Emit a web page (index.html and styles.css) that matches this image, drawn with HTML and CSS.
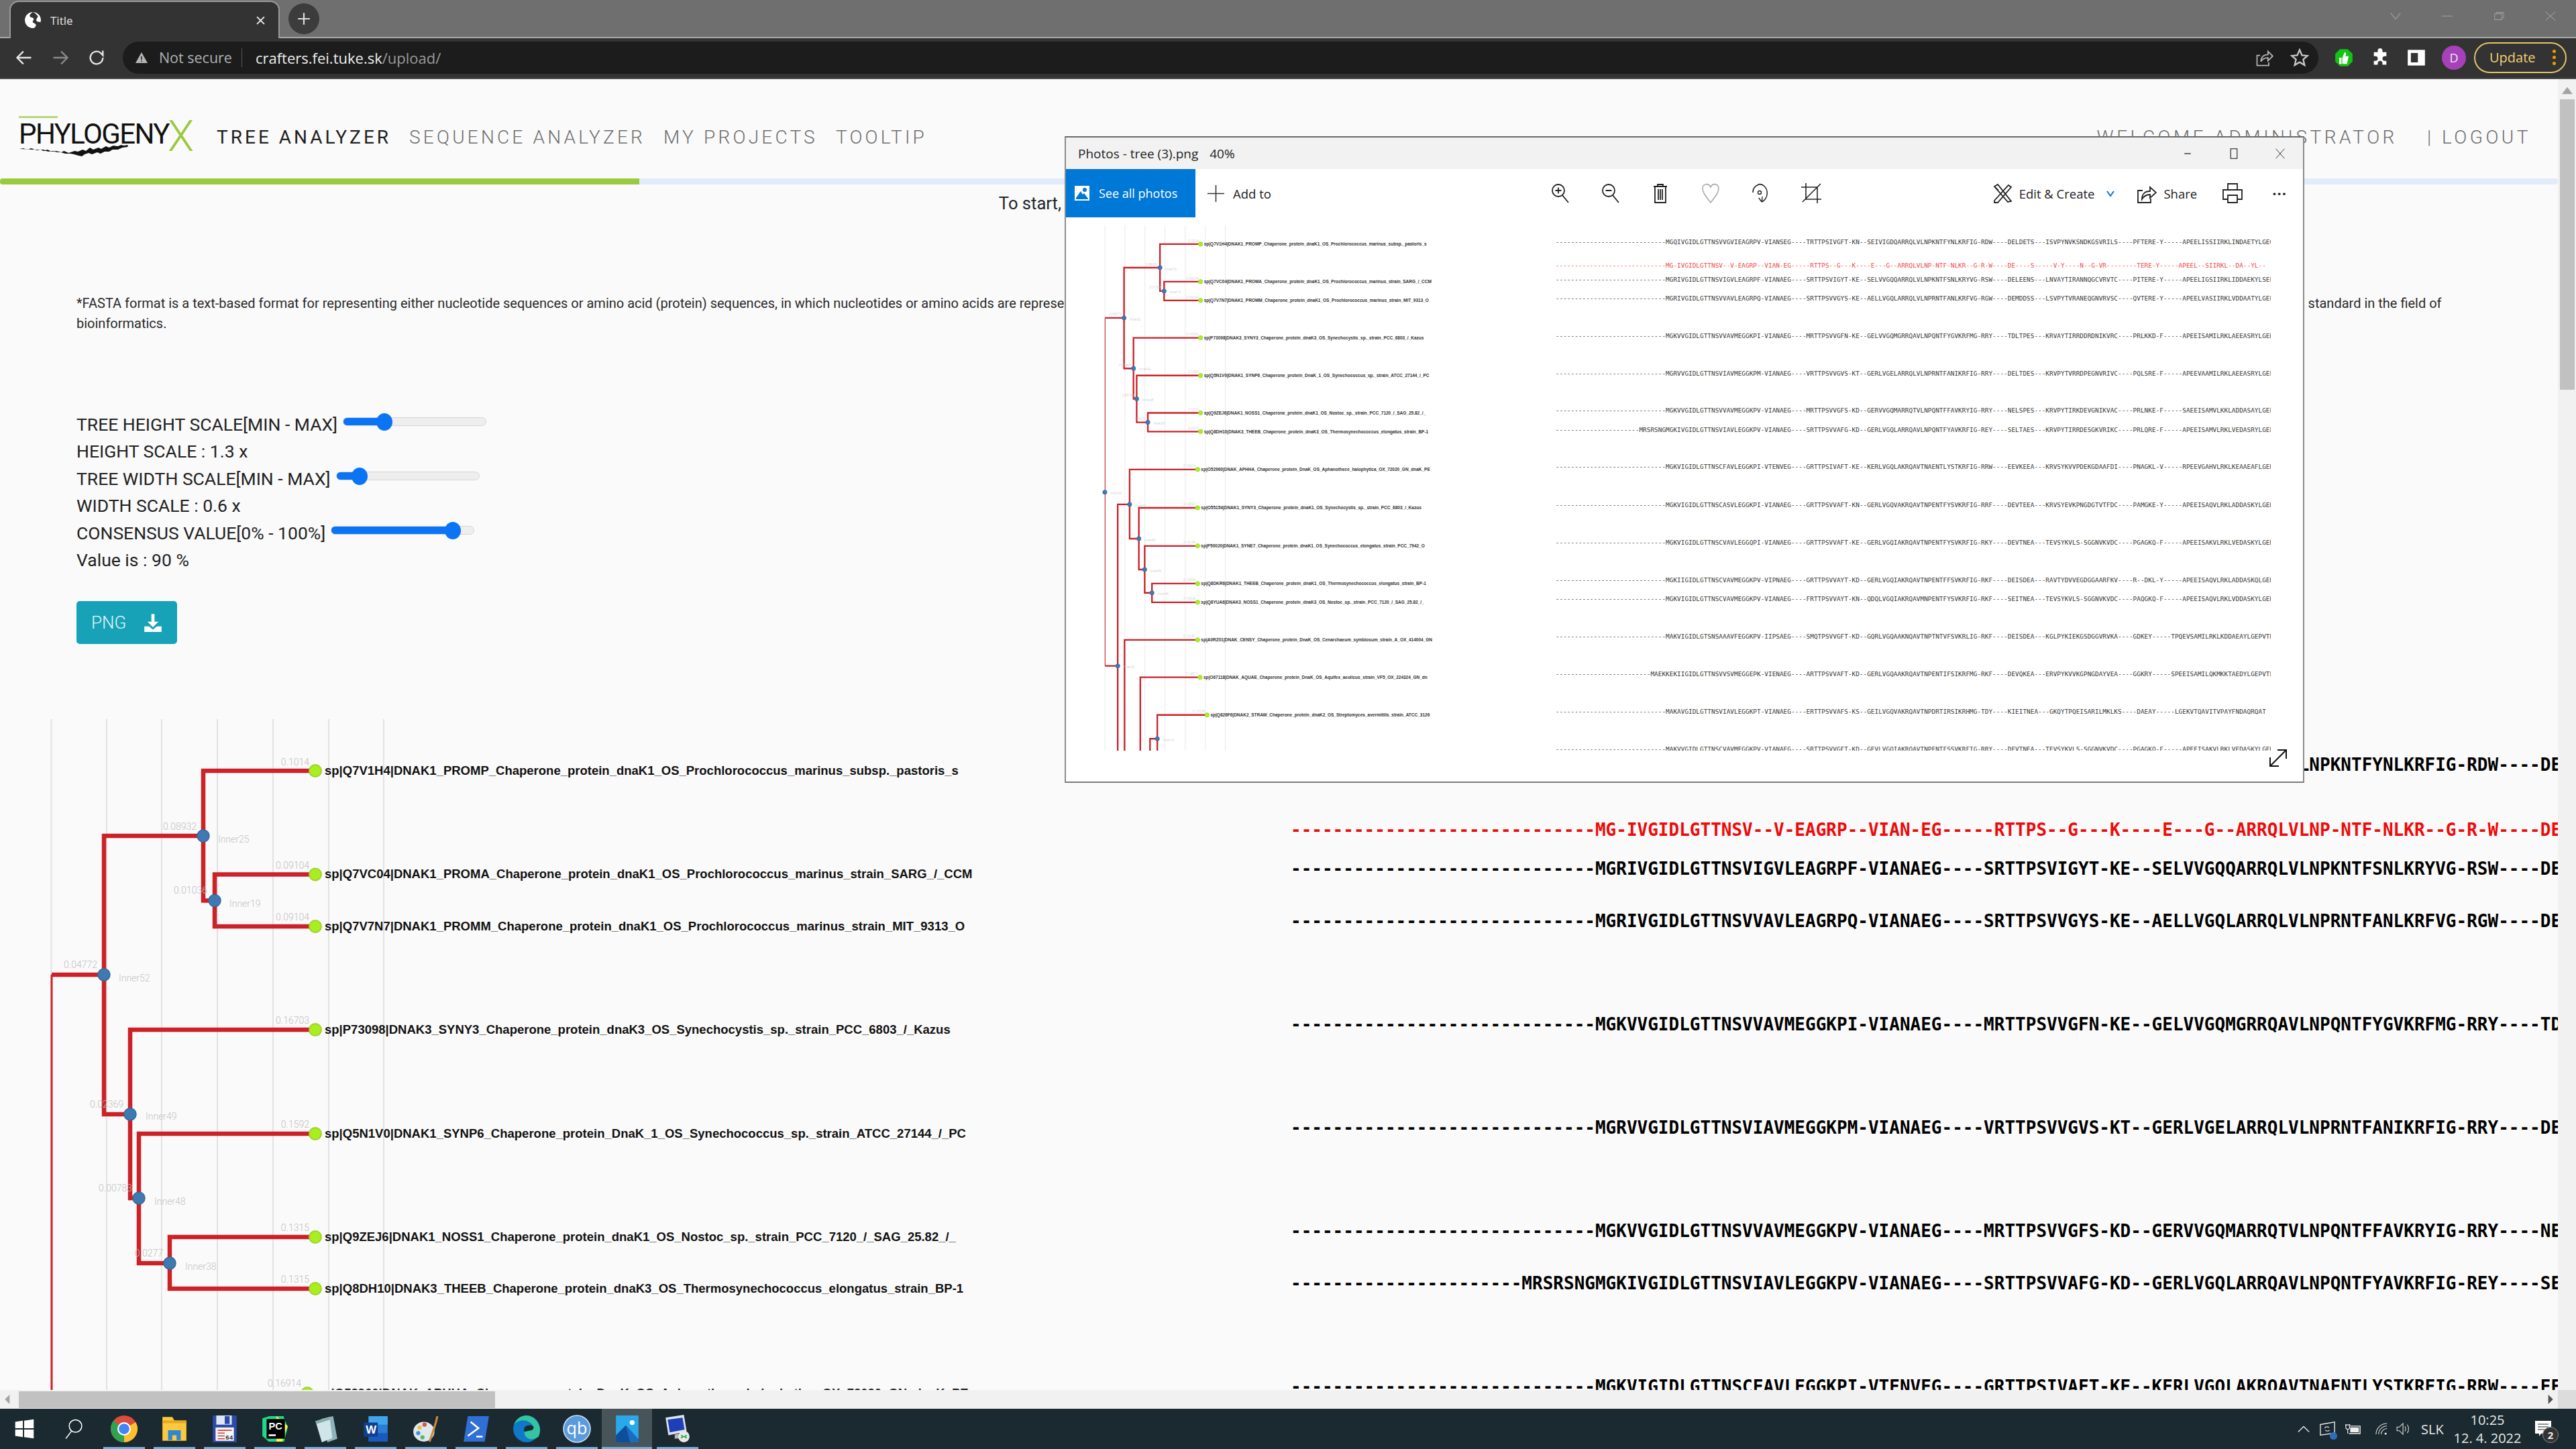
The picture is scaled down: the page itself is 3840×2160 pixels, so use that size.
FILE: index.html
```html
<!DOCTYPE html>
<html lang="en">
<head>
<meta charset="utf-8">
<title>Title</title>
<link rel="stylesheet" href="styles.css">
</head>
<body>
<div class="tabstrip">
  <div class="tab">
    <svg class="tab-globe" viewBox="0 0 24 24"><circle cx="12" cy="12" r="11" fill="#fff"/><path d="M12 1c-3 2-5 4-4 6s4 1 5 3-2 3-1 5 3 1 4 3-1 4-3 5c5 0 9-3 10-8-3-1-5 0-6-2s1-4 2-6c-2-3-4-5-7-6z" fill="#333"/></svg>
    <span class="tab-title">Title</span>
    <svg class="tab-close" viewBox="0 0 12 12"><path d="M1 1l10 10M11 1L1 11" stroke="#e8e8e8" stroke-width="1.8"/></svg>
  </div>
  <div class="newtab"><svg viewBox="0 0 20 20"><path d="M10 2v16M2 10h16" stroke="#ddd" stroke-width="2"/></svg></div>
  <div class="winctl">
    <svg viewBox="0 0 20 14"><path d="M2 2l8 10 8-10" stroke="#9a9a9a" fill="none" stroke-width="1.4"/></svg>
    <svg viewBox="0 0 20 14"><path d="M1 7h18" stroke="#9a9a9a" stroke-width="1.4"/></svg>
    <svg viewBox="0 0 20 14"><path d="M3 3h12v10H3zM6 3V1h12v9h-3" stroke="#9a9a9a" fill="none" stroke-width="1.2"/></svg>
    <svg viewBox="0 0 20 14"><path d="M2 0l16 14M18 0L2 14" stroke="#9a9a9a" stroke-width="1.2"/></svg>
  </div>
</div>

<div class="toolbar">
  <svg class="nav-ico" viewBox="0 0 24 24"><path d="M21 12H4M11 4l-8 8 8 8" fill="none" stroke="#e8e8e8" stroke-width="2"/></svg>
  <svg class="nav-ico" viewBox="0 0 24 24"><path d="M3 12h17M13 4l8 8-8 8" fill="none" stroke="#8a8a8a" stroke-width="2"/></svg>
  <svg class="nav-ico" viewBox="0 0 24 24"><path d="M20 12a8 8 0 1 1-2.5-5.8L20 9V3" fill="none" stroke="#e8e8e8" stroke-width="2"/></svg>
  <div class="omnibox">
    <svg class="warn" viewBox="0 0 20 20"><path d="M10 2l9 16H1z" fill="#b5b5b5"/><path d="M10 8v5M10 14.500v1.500" stroke="#1c1c1c" stroke-width="1.500"/></svg>
    <span class="notsecure">Not secure</span>
    <span class="url"><b>crafters.fei.tuke.sk</b>/upload/</span>
    <svg class="omni-ico share-ico" viewBox="0 0 24 24"><path d="M7 9H3v13h15v-4M8 17c0-6 4-9 9-9V4l6 6-6 6v-4c-4 0-7 1-9 5z" fill="none" stroke="#b8b8b8" stroke-width="1.500"/></svg>
    <svg class="omni-ico" viewBox="0 0 24 24"><path d="M12 2l3 7 7 .6-5.400 4.700 1.700 7.200L12 17.700l-6.300 3.800 1.700-7.200L2 9.600 9 9z" fill="none" stroke="#c8c8c8" stroke-width="2"/></svg>
  </div>
  <div class="ext-row">
    <svg class="ext" viewBox="0 0 24 24"><path d="M7 1h10l6 6v10l-6 6H7l-6-6V7z" fill="#14c414"/><path d="M6 12h3v8H6zM10 12l3-7c2 0 2 2 1 5h4l-2 10h-6z" fill="#fff"/></svg>
    <svg class="ext" viewBox="0 0 24 24"><path d="M9 3a3 3 0 0 1 6 0v2h5v5h-2a3 3 0 0 0 0 6h2v5h-5v-2a3 3 0 0 0-6 0v2H4v-5h2a3 3 0 0 0 0-6H4V5h5z" fill="#fff"/></svg>
    <svg class="ext" viewBox="0 0 24 24"><path d="M1 2h22v20H1z" fill="#fff"/><path d="M5 6h9v12H5z" fill="#333"/></svg>
    <span class="avatar">D</span>
    <span class="update">Update<i class="dots"></i></span>
  </div>
</div>

<main class="page">
  <div class="viewport">
    <header class="site-header">
      <div class="logo">
        <span class="logo-bar"></span>
        <span class="logo-text">PHYLOGENY</span><span class="logo-x">X</span>
        <svg class="logo-smear" viewBox="0 0 220 20" preserveAspectRatio="none"><path d="M0 6l6-1 5 2 7-2 8 3 6-1 4 2 6-2 7 3 6-1 8 2 4-2 7 3 9-3 5 1 7-3 5 2 6-5 5 3 8-3 4 2 7-4 5 2 6-3 7 1 5-2 4 1 6-1v3l-8 1-7 3-8 0-5 3-7 0-6 3-5-2-8 3-5-2-6 2-4 3-5-1-7-2-5-1-8 0-7-2-5 0-8-2-6 1-7-3-6 0z" fill="#111"/></svg>
      </div>
      <nav class="mainnav">
        <a class="active">TREE ANALYZER</a>
        <a>SEQUENCE ANALYZER</a>
        <a>MY PROJECTS</a>
        <a>TOOLTIP</a>
      </nav>
      <div class="usernav"><a>WELCOME ADMINISTRATOR</a><a>| LOGOUT</a></div>
    </header>
    <div class="progress"><div class="progress-fill"></div></div>
    <p class="lead">To start, upload a file in FASTA format or choose one of your own projects</p>
    <p class="fasta">*FASTA format is a text-based format for representing either nucleotide sequences or amino acid (protein) sequences, in which nucleotides or amino acids are represented using single-letter codes. The format allows for sequence names and comments to precede the sequences. The format originates from the FASTA software package, but has since become a near universal standard in the field of bioinformatics.</p>
    <form class="controls">
      <div class="ctl-row"><label for="h">TREE HEIGHT SCALE[MIN - MAX]</label><input id="h" class="range" type="range" min="0" max="100" value="26" style="--p:29%"></div>
      <div class="ctl-row">HEIGHT SCALE : 1.3 x</div>
      <div class="ctl-row"><label for="w">TREE WIDTH SCALE[MIN - MAX]</label><input id="w" class="range" type="range" min="0" max="100" value="12" style="--p:16%"></div>
      <div class="ctl-row">WIDTH SCALE : 0.6 x</div>
      <div class="ctl-row"><label for="c">CONSENSUS VALUE[0% - 100%]</label><input id="c" class="range" type="range" min="0" max="100" value="90" style="--p:85%"></div>
      <div class="ctl-row">Value is : 90 %</div>
      <button class="png" type="button">PNG
        <svg viewBox="0 0 24 24"><path d="M10 1h4v10h5l-7 7-7-7h5z" fill="#fff"/><path d="M1 17h6l5 4 5-4h6v7H1z" fill="#fff"/></svg>
      </button>
    </form>

    <svg class="tree-view" viewBox="0 1060 3813 1012">
      <defs>
        <g id="tree">
          <g class="grid">
            <path d="M76.500 1072V3300M159 1072V3300M241 1072V3300M324 1072V3300M407 1072V3300M490 1072V3300M572 1072V3300"/>
          </g>
          <path class="root" d="M77 1453V2886"/>
          <path class="br" d="M77 1453H155V1246H303V1149H470M303 1246V1342.500H320V1303.500H470M320 1342.500V1381H470M155 1453V1661H194V1535H470M194 1661V1786H207V1690H470M207 1786V1883H253V1844H470M253 1883V1921H470"/>
          <path class="br" d="M77 2886H129V2221H178V2077H458M178 2221V2362H216V2235H458M216 2362V2489H240V2392H458M240 2489V2585H270V2547H458M270 2585V2624H458M129 2886V3300M157 3300V2779H458M222 3300V2933H468M262 3300V3186H292V3088H497M292 3186V3300"/>
          <g class="inner">
            <circle cx="303" cy="1246" r="9"/><circle cx="320" cy="1342.500" r="9"/><circle cx="155" cy="1453" r="9"/><circle cx="194" cy="1661" r="9"/><circle cx="207" cy="1786" r="9"/><circle cx="253" cy="1883" r="9"/><circle cx="76" cy="2171" r="9"/><circle cx="178" cy="2221" r="9"/><circle cx="216" cy="2362" r="9"/><circle cx="240" cy="2489" r="9"/><circle cx="270" cy="2585" r="9"/><circle cx="129" cy="2886" r="9"/><circle cx="292" cy="3186" r="9"/>
          </g>
          <g class="tip">
            <circle cx="470" cy="1149" r="9"/><circle cx="470" cy="1303.500" r="9"/><circle cx="470" cy="1381" r="9"/><circle cx="470" cy="1535" r="9"/><circle cx="470" cy="1690" r="9"/><circle cx="470" cy="1844" r="9"/><circle cx="470" cy="1921" r="9"/><circle cx="458" cy="2077" r="9"/><circle cx="458" cy="2235" r="9"/><circle cx="458" cy="2392" r="9"/><circle cx="458" cy="2547" r="9"/><circle cx="458" cy="2624" r="9"/><circle cx="458" cy="2779" r="9"/><circle cx="468" cy="2933" r="9"/><circle cx="497" cy="3088" r="9"/>
          </g>
          <g class="blen">
            <text x="461" y="1141">0.1014</text><text x="293" y="1237">0.08932</text><text x="461" y="1295">0.09104</text><text x="309" y="1332">0.01036</text><text x="461" y="1372">0.09104</text><text x="145" y="1443">0.04772</text><text x="461" y="1526">0.16703</text><text x="184" y="1651">0.02369</text><text x="461" y="1681">0.1592</text><text x="197" y="1776">0.00783</text><text x="461" y="1835">0.1315</text><text x="243" y="1873">0.0277</text><text x="461" y="1912">0.1315</text><text x="449" y="2067">0.16914</text><text x="449" y="2225">0.14593</text><text x="449" y="2382">0.13199</text><text x="449" y="2537">0.10368</text><text x="449" y="2614">0.10368</text><text x="449" y="2769">0.19187</text><text x="459" y="2923">0.14817</text><text x="488" y="3078">0.12239</text>
          </g>
          <g class="inlabel">
            <text x="325" y="1256">Inner25</text><text x="342" y="1352">Inner19</text><text x="177" y="1463">Inner52</text><text x="217" y="1669">Inner49</text><text x="230" y="1796">Inner48</text><text x="276" y="1893">Inner38</text><text x="98" y="2181">Inner54</text><text x="200" y="2231">Inner50</text><text x="238" y="2372">Inner43</text><text x="262" y="2499">Inner39</text><text x="292" y="2595">Inner36</text><text x="151" y="2896">Inner53</text><text x="314" y="3196">Inner14</text>
          </g>
          <g class="leaf">
            <text x="484" y="1155">sp|Q7V1H4|DNAK1_PROMP_Chaperone_protein_dnaK1_OS_Prochlorococcus_marinus_subsp._pastoris_s</text>
            <text x="484" y="1309">sp|Q7VC04|DNAK1_PROMA_Chaperone_protein_dnaK1_OS_Prochlorococcus_marinus_strain_SARG_/_CCM</text>
            <text x="484" y="1387">sp|Q7V7N7|DNAK1_PROMM_Chaperone_protein_dnaK1_OS_Prochlorococcus_marinus_strain_MIT_9313_O</text>
            <text x="484" y="1541">sp|P73098|DNAK3_SYNY3_Chaperone_protein_dnaK3_OS_Synechocystis_sp._strain_PCC_6803_/_Kazus</text>
            <text x="484" y="1696">sp|Q5N1V0|DNAK1_SYNP6_Chaperone_protein_DnaK_1_OS_Synechococcus_sp._strain_ATCC_27144_/_PC</text>
            <text x="484" y="1850">sp|Q9ZEJ6|DNAK1_NOSS1_Chaperone_protein_dnaK1_OS_Nostoc_sp._strain_PCC_7120_/_SAG_25.82_/_</text>
            <text x="484" y="1927">sp|Q8DH10|DNAK3_THEEB_Chaperone_protein_dnaK3_OS_Thermosynechococcus_elongatus_strain_BP-1</text>
            <text x="472" y="2083">sp|O52960|DNAK_APHHA_Chaperone_protein_DnaK_OS_Aphanothece_halophytica_OX_72020_GN_dnaK_PE</text>
            <text x="472" y="2241">sp|O55154|DNAK1_SYNY3_Chaperone_protein_dnaK1_OS_Synechocystis_sp._strain_PCC_6803_/_Kazus</text>
            <text x="472" y="2398">sp|P50020|DNAK1_SYNE7_Chaperone_protein_dnaK1_OS_Synechococcus_elongatus_strain_PCC_7942_O</text>
            <text x="472" y="2553">sp|Q8DKR6|DNAK1_THEEB_Chaperone_protein_dnaK1_OS_Thermosynechococcus_elongatus_strain_BP-1</text>
            <text x="472" y="2630">sp|Q8YUA6|DNAK3_NOSS1_Chaperone_protein_dnaK3_OS_Nostoc_sp._strain_PCC_7120_/_SAG_25.82_/_</text>
            <text x="472" y="2785">sp|A0RZ01|DNAK_CENSY_Chaperone_protein_DnaK_OS_Cenarchaeum_symbiosum_strain_A_OX_414004_GN</text>
            <text x="482" y="2939">sp|O67118|DNAK_AQUAE_Chaperone_protein_DnaK_OS_Aquifex_aeolicus_strain_VF5_OX_224324_GN_dn</text>
            <text x="511" y="3094">sp|Q826F6|DNAK2_STRAW_Chaperone_protein_dnaK2_OS_Streptomyces_avermitilis_strain_ATCC_3126</text>
          </g>
          <g class="seq">
            <text x="1924" y="1149">-----------------------------MGQIVGIDLGTTNSVVGVIEAGRPV-VIANSEG----TRTTPSIVGFT-KN--SEIVIGDQARRQLVLNPKNTFYNLKRFIG-RDW----DELDETS---ISVPYNVKSNDKGSVRILS----PFTERE-Y-----APEELISSIIRKLINDAETYLGEQ</text>
            <text class="consensus" x="1924" y="1246">-----------------------------MG-IVGIDLGTTNSV--V-EAGRP--VIAN-EG-----RTTPS--G---K----E---G--ARRQLVLNP-NTF-NLKR--G-R-W----DE----S-----V-Y----N--G-VR--------TERE-Y-----APEEL--SIIRKL--DA--YL--</text>
            <text x="1924" y="1304">-----------------------------MGRIVGIDLGTTNSVIGVLEAGRPF-VIANAEG----SRTTPSVIGYT-KE--SELVVGQQARRQLVLNPKNTFSNLKRYVG-RSW----DELEENS---LNVAYTIRANNQGCVRVTC----PITERE-Y-----APEELIGSIIRKLIDDAEKYLSEP</text>
            <text x="1924" y="1382">-----------------------------MGRIVGIDLGTTNSVVAVLEAGRPQ-VIANAEG----SRTTPSVVGYS-KE--AELLVGQLARRQLVLNPRNTFANLKRFVG-RGW----DEMDDSS---LSVPYTVRANEQGNVRVSC----QVTERE-Y-----APEELVASIIRKLVDDAATYLGEP</text>
            <text x="1924" y="1536">-----------------------------MGKVVGIDLGTTNSVVAVMEGGKPI-VIANAEG----MRTTPSVVGFN-KE--GELVVGQMGRRQAVLNPQNTFYGVKRFMG-RRY----TDLTPES---KRVAYTIRRDDRDNIKVRC----PRLKKD-F-----APEEISAMILRKLAEEASRYLGEK</text>
            <text x="1924" y="1690">-----------------------------MGRVVGIDLGTTNSVIAVMEGGKPM-VIANAEG----VRTTPSVVGVS-KT--GERLVGELARRQLVLNPRNTFANIKRFIG-RRY----DELTDES---KRVPYTVRRDPEGNVRIVC----PQLSRE-F-----APEEVAAMILRKLAEEASRYLGEP</text>
            <text x="1924" y="1844">-----------------------------MGKVVGIDLGTTNSVVAVMEGGKPV-VIANAEG----MRTTPSVVGFS-KD--GERVVGQMARRQTVLNPQNTFFAVKRYIG-RRY----NELSPES---KRVPYTIRKDEVGNIKVAC----PRLNKE-F-----SAEEISAMVLKKLADDASAYLGEP</text>
            <text x="1924" y="1922">----------------------MRSRSNGMGKIVGIDLGTTNSVIAVLEGGKPV-VIANAEG----SRTTPSVVAFG-KD--GERLVGQLARRQAVLNPQNTFYAVKRFIG-REY----SELTAES---KRVPYTIRRDESGKVRIKC----PRLQRE-F-----APEEISAMVLRKLVEDASRYLGEP</text>
            <text x="1924" y="2076">-----------------------------MGKVIGIDLGTTNSCFAVLEGGKPI-VTENVEG----GRTTPSIVAFT-KE--KERLVGQLAKRQAVTNAENTLYSTKRFIG-RRW----EEVKEEA---KRVSYKVVPDEKGDAAFDI----PNAGKL-V-----RPEEVGAHVLRKLKEAAEAFLGEK</text>
            <text x="1924" y="2231">-----------------------------MGKVIGIDLGTTNSCASVLEGGKPI-VIANAEG----GRTTPSVVAFT-KN--GERLVGQVAKRQAVTNPENTFYSVKRFIG-RRF----DEVTEEA---KRVSYEVKPNGDGTVTFDC----PAMGKE-Y-----APEEISAQVLRKLADDASKYLGEK</text>
            <text x="1924" y="2388">-----------------------------MGKVIGIDLGTTNSCVAVLEGGQPI-VIANAEG----GRTTPSVVAFT-KE--GERLVGQIAKRQAVTNPENTFYSVKRFIG-RKY----DEVTNEA---TEVSYKVLS-SGGNVKVDC----PGAGKQ-F-----APEEISAKVLRKLVEDASKYLGEK</text>
            <text x="1924" y="2543">-----------------------------MGKIIGIDLGTTNSCVAVMEGGKPV-VIPNAEG----GRTTPSVVAYT-KD--GERLVGQIAKRQAVTNPENTFFSVKRFIG-RKF----DEISDEA---RAVTYDVVEGDGGAARFKV----R--DKL-Y-----APEEISAQVLRKLADDASKQLGEK</text>
            <text x="1924" y="2620">-----------------------------MGKVIGIDLGTTNSCVAVMEGGKPV-VIANAEG----FRTTPSVVAYT-KN--QDQLVGQIAKRQAVMNPENTFYSVKRFIG-RKF----SEITNEA---TEVSYKVLS-SGGNVKVDC----PAQGKQ-F-----APEEISAQVLRKLVDDASKYLGEK</text>
            <text x="1924" y="2775">-----------------------------MAKVIGIDLGTSNSAAAVFEGGKPV-IIPSAEG----SMQTPSVVGFT-KD--GQRLVGQAAKNQAVTNPTNTVFSVKRLIG-RKF----DEISDEA---KGLPYKIEKGSDGGVRVKA----GDKEY-----TPQEVSAMILRKLKDDAEAYLGEPVTKAV</text>
            <text x="1924" y="2929">-------------------------MAEKKEKIIGIDLGTTNSVVSVMEGGEPK-VIENAEG----ARTTPSVVAFT-KD--GERLVGQAAKRQAVTNPENTIFSIKRFMG-RKF----DEVQKEA---ERVPYKVVKGPNGDAYVEA----GGKRY-----SPEEISAMILQKMKKTAEDYLGEPVTEAV</text>
            <text x="1924" y="3084">-----------------------------MAKAVGIDLGTTNSVIAVLEGGKPT-VIANAEG----ERTTPSVVAFS-KS--GEILVGQVAKRQAVTNPDRTIRSIKRHMG-TDY----KIEITNEA---GKQYTPQEISARILMKLKS----DAEAY-----LGEKVTQAVITVPAYFNDAQRQAT</text>
            <text x="1924" y="3239">-----------------------------MAKVVGIDLGTTNSCVAVMEGGKPV-VIANAEG----SRTTPSVVGFT-KD--GEVLVGQIAKRQAVTNPENTFSSVKRFIG-RRY----DEVTNEA---TEVSYKVLS-SGGNVKVDC----PGAGKQ-F-----APEEISAKVLRKLVEDASKYLGEK</text>
          </g>
        </g>
      </defs>
      <use href="#tree"/>
    </svg>
  </div>

  <div class="vscroll">
    <svg class="sb-arrow" viewBox="0 0 12 12"><path d="M6 2l6 8H0z" fill="#a3a3a3"/></svg>
    <div class="vthumb"></div>
  </div>
  <div class="hscroll">
    <svg class="sb-arrow-h" viewBox="0 0 12 12"><path d="M8 0v12L2 6z" fill="#a3a3a3"/></svg>
    <div class="hthumb"></div>
    <svg class="sb-arrow-h end" viewBox="0 0 12 12"><path d="M4 0v12l6-6z" fill="#505050"/></svg>
  </div>
  <div class="corner"></div>

  <section class="photos">
    <div class="ph-title">
      <span>Photos - tree (3).png</span><span class="ph-zoom">40%</span>
      <div class="ph-ctl">
        <svg viewBox="0 0 20 20"><path d="M4 10h12" stroke="#111" stroke-width="1.500"/></svg>
        <svg viewBox="0 0 20 20"><path d="M4 1h12v18H4z" fill="none" stroke="#111" stroke-width="1.300"/></svg>
        <svg viewBox="0 0 20 20"><path d="M2 1l16 18M18 1L2 19" stroke="#111" stroke-width="1"/></svg>
      </div>
    </div>
    <div class="ph-bar">
      <a class="see-all">
        <svg viewBox="0 0 24 24"><path d="M1 1h22v22H1z" fill="#fff"/><circle cx="16" cy="7" r="3" fill="#0078d7"/><path d="M3 19l7-10 3 5 2-2 6 8v1H3z" fill="#0078d7"/></svg>
        See all photos
      </a>
      <a class="ph-btn add"><svg viewBox="0 0 24 24"><path d="M12 0v24M0 12h24" stroke="#333" stroke-width="1.500"/></svg>Add to</a>
      <div class="ph-icons">
        <svg viewBox="0 0 30 30"><circle cx="12" cy="11" r="9" fill="none" stroke="#222" stroke-width="1.800"/><path d="M7.500 11h9M12 6.500v9M18 18l9 11" stroke="#222" stroke-width="1.800"/></svg>
        <svg viewBox="0 0 30 30"><circle cx="12" cy="11" r="9" fill="none" stroke="#222" stroke-width="1.800"/><path d="M7.500 11h9M18 18l9 11" stroke="#222" stroke-width="1.800"/></svg>
        <svg viewBox="0 0 30 30"><path d="M5 5h20M11 5V2h8v3M7 5v24h16V5M12 9v16M15 9v16M18 9v16" fill="none" stroke="#222" stroke-width="1.800"/></svg>
        <svg viewBox="0 0 30 30"><path d="M15 29C8 20 3 14 3 8c0-7 9-9 12-2 3-7 12-5 12 2 0 6-5 12-12 21z" fill="none" stroke="#aaa" stroke-width="1.600"/></svg>
        <svg viewBox="0 0 30 30"><path d="M12 2C20 0 27 7 27 15c0 6-4 11-9 13M18 28l-5-6M18 28l1-8" fill="none" stroke="#222" stroke-width="1.600" transform="matrix(.9 0 0 1 0 0)"/><circle cx="13" cy="14" r="2.500" fill="none" stroke="#222" stroke-width="1.400"/><path d="M12 2C6 4 3 9 3 14" fill="none" stroke="#222" stroke-width="1.600"/></svg>
        <svg viewBox="0 0 30 30"><path d="M7 0v24h23M0 6h24v24M2 28L29 1" fill="none" stroke="#222" stroke-width="1.600"/></svg>
      </div>
      <div class="ph-right">
        <a class="ph-btn edit"><svg viewBox="0 0 30 30"><path d="M3 5l5-3 20 25-5 1zM3 26L24 3l4 3L8 29H3zM3 5l6 6" fill="none" stroke="#222" stroke-width="1.800"/></svg>Edit &amp; Create<svg class="chev" viewBox="0 0 12 12"><path d="M1 3l5 7 5-7" fill="none" stroke="#0078d7" stroke-width="2"/></svg></a>
        <a class="ph-btn share"><svg viewBox="0 0 30 30"><path d="M9 11H2v18h19v-6M8 24c0-8 5-12 12-12V6l9 8-9 8v-5c-5 0-9 2-12 7z" fill="none" stroke="#222" stroke-width="1.800"/></svg>Share</a>
        <svg class="ph-print" viewBox="0 0 30 30"><path d="M8 10V1h14v9M8 24H1V10h28v14h-7M8 18h14v11H8z" fill="none" stroke="#222" stroke-width="1.800"/></svg>
        <span class="ph-more">···</span>
      </div>
    </div>
    <svg class="ph-image" viewBox="-84 1072 4961 2163"><use href="#tree"/></svg>
    <svg class="ph-expand" viewBox="0 0 30 30"><path d="M3 27L27 3M14 3h13v13M3 14v13h13" fill="none" stroke="#111" stroke-width="2"/></svg>
  </section>
</main>

<footer class="taskbar">
  <div class="tb-item tb-start"><svg viewBox="0 0 40 40"><path d="M6 9l12-2v12H6zM20 7l15-2v14H20zM6 21h12v12L6 31zM20 21h15v14l-15-2z" fill="#fff"/></svg></div>
  <div class="tb-item tb-search"><svg viewBox="0 0 40 40"><circle cx="23" cy="15" r="11" fill="none" stroke="#fff" stroke-width="1.800"/><path d="M16 24L6 37" stroke="#fff" stroke-width="1.800"/></svg></div>
  <div class="tb-item run"><svg viewBox="0 0 40 40"><circle cx="20" cy="20" r="19" fill="#dd4b3e"/><path d="M20 20L3.600 29.500A19 19 0 0 1 5 8.300z" fill="#2fa34f"/><path d="M20 20L20 39A19 19 0 0 1 3.600 29.500z" fill="#2fa34f"/><path d="M20 20l16.500-9.500A19 19 0 0 1 20 39z" fill="#fbc02d"/><circle cx="20" cy="20" r="9.500" fill="#fff"/><circle cx="20" cy="20" r="7.500" fill="#4285f4"/></svg></div>
  <div class="tb-item run"><svg viewBox="0 0 40 40"><path d="M3 3h14l3 5h17v29H3z" fill="#fcc93c"/><path d="M3 8h34v4H3z" fill="#e8a71f"/><path d="M11 36V22h18v14h-6v-7h-6v7z" fill="#2b88d8"/></svg></div>
  <div class="tb-item run"><svg viewBox="0 0 40 40"><path d="M3 1h34v38H3z" fill="#2c4aa8"/><path d="M8 1h22v13H8z" fill="#dfe6f5"/><path d="M20 2h7v11h-7z" fill="#2c4aa8"/><path d="M7 18h26v19H7z" fill="#f5f5f5"/><path d="M10 22h20M10 26h10M10 30h10M10 34h10" stroke="#c44" stroke-width="1.500"/><text class="ico-64" x="21" y="35">64</text></svg></div>
  <div class="tb-item run"><svg viewBox="0 0 40 40"><path d="M2 5l10-3 20 0 6 16-5 20-22 0-9-8z" fill="#21d789"/><path d="M22 2l16 14-8 22-8 0z" fill="#fcf84a"/><path d="M8 6h26v28H8z" fill="#000"/><text class="ico-pc" x="11" y="21">PC</text><path d="M11 29h10" stroke="#fff" stroke-width="2.500"/></svg></div>
  <div class="tb-item run"><svg viewBox="0 0 40 40"><path d="M14 6l17-4 6 32-14 5z" fill="#8fb3bb"/><path d="M6 9l20-6 4 30-15 6z" fill="#cfe5e8"/><path d="M6 9l20-6 1 4L7 13z" fill="#8aa"/></svg></div>
  <div class="tb-item run"><svg viewBox="0 0 40 40"><path d="M10 2h27v36H10z" fill="#2b7cd3"/><path d="M10 2h27v12H10z" fill="#41a5ee"/><path d="M10 26h27v12H10z" fill="#185abd"/><path d="M3 11h20v20H3z" fill="#103f91"/><text class="ico-w" x="6" y="27">W</text></svg></div>
  <div class="tb-item run"><svg viewBox="0 0 40 40"><ellipse cx="17" cy="24" rx="15" ry="14" fill="#dfe8ec"/><circle cx="11" cy="18" r="3" fill="#e8c43c"/><circle cx="18" cy="14" r="3" fill="#d9534f"/><circle cx="9" cy="26" r="3" fill="#4a90d9"/><circle cx="15" cy="32" r="3" fill="#5cb85c"/><path d="M36 2c-1 8-6 22-11 36" stroke="#c98a3c" stroke-width="3" fill="none"/></svg></div>
  <div class="tb-item run"><svg viewBox="0 0 40 40"><path d="M8 2h30l-6 36H2z" fill="#2f6fd6"/><path d="M12 10l11 9-15 11M20 31h9" fill="none" stroke="#fff" stroke-width="2.500"/></svg></div>
  <div class="tb-item run"><svg viewBox="0 0 40 40"><circle cx="20" cy="20" r="19" fill="#0f78c8"/><path d="M38 16C35 6 26 1 20 1 12 1 5 6 2 14c5-6 14-8 21-4 6 3 8 8 4 12-5 0-11-1-10 5 1 7 11 11 20 4 2-4 3-10 1-15z" fill="#33c5a0"/><path d="M17 24c-3-7 4-10 10-9 4 1 4 5 0 7z" fill="#1b2a30"/></svg></div>
  <div class="tb-item run"><svg viewBox="0 0 40 40"><circle cx="20" cy="20" r="19" fill="#5c9ade" stroke="#cfe3f7" stroke-width="1.500"/><text class="ico-qb" x="20" y="28">qb</text></svg></div>
  <div class="tb-item run active"><svg viewBox="0 0 40 40"><path d="M4 1h32v38H4z" fill="#29a8ea"/><circle cx="27" cy="11" r="3.500" fill="#fff"/><path d="M4 39V29l14-14 18 20v4z" fill="#0f4e98"/><path d="M18 15l18 20v4H24z" fill="#1b6cc0"/></svg></div>
  <div class="tb-item run"><svg viewBox="0 0 40 40"><path d="M3 4l26-4 4 24-26 5z" fill="#dde2ee"/><path d="M6 7l21-3 3 17-21 4z" fill="#1f3fb8"/><path d="M16 28l5-1 4 6-9 1z" fill="#bbb"/><circle cx="29" cy="31" r="8" fill="#e9e9e9"/><path d="M25 29l3 2-3 2M33 29l-3 2 3 2" fill="none" stroke="#2ba84a" stroke-width="1.800"/></svg></div>

  <div class="tray">
    <svg class="tr-caret" viewBox="0 0 20 12"><path d="M1 11l9-9 9 9" fill="none" stroke="#e8e8e8" stroke-width="1.500"/></svg>
    <span class="tr-sync"><svg viewBox="0 0 26 24"><path d="M1 5l23-4v18L1 22z" fill="none" stroke="#e8e8e8" stroke-width="1.500"/><path d="M8 11c1-3 5-3 7-1M16 14c-2 2-5 2-7 0" fill="none" stroke="#e8e8e8" stroke-width="1.300"/></svg><i class="tr-dot"></i></span>
    <svg class="tr-bat" viewBox="0 0 26 18"><path d="M1 1v5c0 2 1 3 3 3s3-1 3-3V1M0 2h8M4 9v7" fill="none" stroke="#eee" stroke-width="1.300"/><path d="M8 4h16v12H6" fill="none" stroke="#eee" stroke-width="1.500"/><path d="M8 6h14v8H8z" fill="#eee"/></svg>
    <svg class="tr-wifi" viewBox="0 0 20 20"><path d="M1 18A17 17 0 0 1 18 1M5 18A13 13 0 0 1 18 5M9 18a9 9 0 0 1 9-9" fill="none" stroke="#ddd" stroke-width="1.100"/><circle cx="16" cy="17" r="1.500" fill="#fff"/></svg>
    <svg class="tr-vol" viewBox="0 0 24 20"><path d="M1 7h4l6-6v18l-6-6H1zM14 6c2 2 2 6 0 8M18 3c3 4 3 10 0 14" fill="none" stroke="#ddd" stroke-width="1.200"/></svg>
    <span class="tr-lang">SLK</span>
    <div class="tr-clock"><span>10:25</span><span>12. 4. 2022</span></div>
    <span class="tr-note"><svg viewBox="0 0 24 24"><path d="M0 0h24v19H9l-3 4v-4H0z" fill="#fff"/><path d="M4 5h16M4 9h16M4 13h16" stroke="#1b2a30" stroke-width="1.200"/></svg><b class="tr-badge">2</b></span>
  </div>
</footer>
</body>
</html>
```

FILE: styles.css
```css
* { box-sizing: border-box; }
html, body { margin: 0; padding: 0; }
body {
  width: 3840px; height: 2160px; overflow: hidden;
  display: flex; flex-direction: column;
  font-family: Roboto, "Liberation Sans", sans-serif;
  color: #212529; background: #fafafa;
}

/* browser chrome */
.tabstrip {
  height: 57px; flex: none; position: relative;
  display: flex; align-items: flex-end; padding-left: 14px;
  background: #6f6f6f; border-bottom: 2px solid #a8a8a8;
}
.tab {
  width: 403px; height: 56px; margin-bottom: -2px;
  display: flex; align-items: center; padding: 0 20px 0 20px;
  background: #333; border: 2px solid #9a9a9a; border-bottom: 0;
  border-radius: 14px 14px 0 0;
}
.tab-globe { width: 26px; height: 26px; }
.tab-title { margin-left: 13px; font: 17px "Open Sans", sans-serif; color: #e4e4e4; }
.tab-close { width: 13px; height: 13px; margin-left: auto; }
.newtab {
  width: 46px; height: 46px; margin: 0 0 4px 13px; border-radius: 50%;
  background: #3c3c3c; display: flex; align-items: center; justify-content: center;
}
.newtab svg { width: 22px; height: 22px; }
.winctl {
  margin-left: auto; align-self: flex-start; margin-top: 16px;
  display: flex; gap: 59px; padding-right: 29px;
}
.winctl svg { width: 18px; height: 16px; }

.toolbar {
  height: 61px; flex: none; display: flex; align-items: center;
  padding: 0 14px 2px 22px; background: #333; border-bottom: 2px solid #4d4d4d;
}
.nav-ico { width: 28px; height: 28px; margin-right: 26px; }
.omnibox {
  width: 3276px; height: 48px; margin-left: -1px; padding: 0 14px 0 18px;
  display: flex; align-items: center;
  background: #1c1c1c; border-radius: 24px;
}
.warn { width: 20px; height: 20px; }
.notsecure {
  margin-left: 16px; padding-right: 14px; height: 28px;
  border-right: 1px solid #555;
  font: 21.500px/28px "Open Sans", sans-serif; color: #aeb2b5;
}
.url { margin-left: 20px; font: 22px "Open Sans", sans-serif; color: #9a9a9a; }
.url b { font-weight: 400; color: #eee; }
.omni-ico { width: 28px; height: 28px; margin-left: 25px; }
.share-ico { margin-left: auto; }
.ext-row { display: flex; align-items: center; margin-left: 24px; }
.ext { width: 28px; height: 34px; margin-right: 26px; }
.avatar {
  width: 36px; height: 36px; margin-left: -2px; border-radius: 50%;
  background: #a641ba; color: #eee; text-align: center;
  font: 18px/36px "Open Sans", sans-serif;
}
.update {
  width: 138px; height: 46px; margin-left: 12px; padding-left: 21px;
  display: flex; align-items: center;
  border: 2px solid #e3c46b; border-radius: 23px;
  font: 20px "Open Sans", sans-serif; color: #f3cf72;
}
.dots {
  width: 5px; height: 5px; margin-left: 25px; border-radius: 50%;
  background: #f29900; box-shadow: 0 -9px #f29900, 0 9px #f29900;
}

/* page */
.page {
  flex: 1; min-height: 0; position: relative;
  display: grid; grid-template: 1fr 28px / 1fr 27px;
}
.viewport { overflow: hidden; background: #fafafa; min-width: 0; }
.site-header { height: 62px; margin-top: 55px; display: flex; align-items: center; padding-left: 28px; }
.logo { width: 257px; height: 62px; position: relative; flex: none; font-family: Roboto, sans-serif; }
.logo-bar { position: absolute; left: 0; top: 0; width: 58px; height: 3px; background: #b7d67c; }
.logo-text { position: absolute; left: 0; top: 0; font-size: 42px; line-height: 46px; letter-spacing: -1.600px; color: #111; margin-top: 4px; }
.logo-x { position: absolute; left: 222px; top: 0; font-size: 64px; line-height: 62px; font-weight: 300; color: #9bc940; }
.logo-smear { position: absolute; left: 1px; top: 43px; width: 218px; height: 20px; }
.mainnav { display: flex; gap: 27px; margin-left: 38px; }
.mainnav a, .usernav a { font-size: 28px; font-weight: 300; letter-spacing: 4.500px; color: #6f6f6f; }
.mainnav a { letter-spacing: 4.200px; }
.mainnav a.active { color: #222; font-weight: 400; letter-spacing: 4px; }
.usernav { margin-left: auto; padding-right: 40px; display: flex; gap: 44px; }
.progress { height: 9px; margin-top: 31px; background: #e3ebfb; border-radius: 4px; overflow: hidden; }
.progress-fill { width: 953px; height: 100%; background: #9bc940; }
.lead { margin: 10px 0 0; height: 36px; text-align: center; font-size: 25.600px; line-height: 36px; white-space: nowrap; }
.fasta { margin: 117px 0 0; padding: 0 150px 0 114px; font-size: 20px; line-height: 29.500px; font-weight: 400; color: #2a2a2a; }
.controls { margin: 115px 0 0; padding-left: 114px; font-size: 26.500px; font-weight: 400; color: #222; }
.ctl-row { height: 40.500px; display: flex; align-items: center; gap: 8px; white-space: nowrap; }
.range {
  -webkit-appearance: none; appearance: none; margin: 0 0 8px; padding: 0;
  width: 214px; height: 26px; background: transparent;
}
.range::-webkit-slider-runnable-track {
  height: 13px; border-radius: 7px; border: 1px solid #d4d4d4;
  background: linear-gradient(to right, #0a74f4 var(--p), #eee var(--p));
}
.range::-webkit-slider-thumb {
  -webkit-appearance: none; appearance: none; margin-top: -7px;
  width: 24px; height: 26px; border-radius: 50%; background: #0a74f4;
}
.png {
  width: 150px; height: 64px; margin-top: 41px; padding: 0 22px;
  display: flex; align-items: center; justify-content: space-between;
  border: 0; border-radius: 5px; background: #17a2b8; color: #e6f6f8;
  font: 300 26px Roboto, sans-serif;
}
.png svg { width: 28px; height: 28px; }
.tree-view { display: block; width: 3813px; height: 1012px; margin-top: 100px; }

/* tree */
.grid path { stroke: #e2e2e2; stroke-width: 2; fill: none; }
.root { stroke: #cb2127; stroke-width: 3; fill: none; }
.br { stroke: #cb2127; stroke-width: 6.500; fill: none; }
.inner circle { fill: #3d7ab2; stroke: #386a9c; stroke-width: 1.500; }
.tip circle { fill: #a9ee1e; stroke: #9fd22e; stroke-width: 2; }
.blen text { font: 300 14px Roboto, sans-serif; fill: #bfbfbf; text-anchor: end; }
.inlabel text { font: 300 14px Roboto, sans-serif; fill: #c4c4c4; }
.leaf text { font: 700 var(--leaf-size, 18.500px) "Liberation Sans", sans-serif; fill: var(--leaf-fill, #111); }
.seq { transform: translateX(var(--seq-dx, 0px)); }
.seq text { font: var(--seq-w, 700) 26px "DejaVu Sans Mono", monospace; fill: var(--seq-fill, #000); }
.seq text.consensus { fill: var(--cons-fill, #ee0a0a); }
.ph-image { --seq-w: 400; --seq-fill: #3a3a3a; --cons-fill: #f04848; --leaf-fill: #333; --leaf-size: 18px; --seq-dx: 8px; }

/* scrollbars */
.vscroll { grid-row: 1 / 2; grid-column: 2; background: #f1f1f1; display: flex; flex-direction: column; align-items: center; padding-top: 9px; }
.sb-arrow { width: 16px; height: 16px; }
.vthumb { width: 22px; height: 433px; margin-top: 5px; background: #c1c1c1; }
.hscroll { grid-row: 2; grid-column: 1; background: #f1f1f1; display: flex; align-items: center; padding: 0 5px; }
.sb-arrow-h { width: 14px; height: 22px; flex: none; }
.sb-arrow-h.end { margin-left: auto; }
.hthumb { width: 710px; height: 25px; margin-left: 9px; background: #c1c1c1; }
.corner { grid-row: 2; grid-column: 2; background: #dcdcdc; }

/* photos window */
.photos {
  position: absolute; left: 1587px; top: 85px; width: 1848px; height: 964px;
  background: #fff; border: 2px solid #6a6a6a;
  border-left-color: #8a8a8a; border-right-color: #8a8a8a; border-bottom-color: #7c7c7c;
  font-family: "Open Sans", sans-serif; color: #222;
}
.ph-title {
  height: 47px; display: flex; align-items: center; padding-left: 18px;
  background: #f2f2f2; font-size: 19px; color: #222;
}
.ph-zoom { margin-left: 17px; }
.ph-ctl { margin-left: auto; display: flex; gap: 53px; padding-right: 26px; }
.ph-ctl svg { width: 16px; height: 26px; }
.ph-bar { height: 72px; display: flex; align-items: center; }
.see-all {
  width: 193px; height: 72px; display: flex; align-items: center; gap: 13px; padding-left: 12px;
  background: #0078d7; color: #fff; font-size: 18px; white-space: nowrap;
}
.see-all svg { width: 24px; height: 24px; }
.ph-btn { display: flex; align-items: center; gap: 10px; font-size: 18.500px; white-space: nowrap; }
.add { margin-left: 18px; gap: 13px; }
.add svg { width: 25px; height: 25px; }
.ph-icons { margin-left: 416px; display: flex; gap: 44.800px; }
.ph-icons svg { width: 30px; height: 30px; }
.ph-right { margin-left: auto; display: flex; align-items: center; padding-right: 24px; }
.ph-right svg { width: 30px; height: 30px; }
.ph-right svg.chev { width: 12px; height: 12px; margin-left: 8px; }
.share { margin-left: 33px; }
.ph-print { margin-left: 38px; }
.ph-more { margin-left: 44px; font-size: 22px; letter-spacing: 1px; font-weight: 700; line-height: 1; }
.ph-image { display: block; width: 1796px; height: 783px; margin-top: 12px; }
.ph-expand { position: absolute; right: 22px; bottom: 20px; width: 30px; height: 30px; }

/* taskbar */
.taskbar {
  height: 60px; flex: none; display: flex; align-items: stretch;
  background: #1b2a30; color: #e8e8e8;
}
.tb-item { width: 75px; position: relative; display: flex; align-items: center; justify-content: center; }
.tb-item svg { width: 42px; height: 42px; }
.tb-start { width: 72px; }
.tb-start svg { width: 38px; height: 38px; }
.tb-search svg { width: 34px; height: 34px; }
.tb-item.run::after {
  content: ""; position: absolute; left: 7px; right: 6px; bottom: 0; height: 3px; background: #76b0dc;
}
.tb-item.active { background: #47545a; }
.tb-item.active::after { left: 0; right: 0; }
.ico-64 { font: 700 9px "Liberation Mono", monospace; fill: #333; }
.ico-pc { font: 700 14px "Liberation Sans", sans-serif; fill: #fff; }
.ico-w { font: 700 16px "Liberation Sans", sans-serif; fill: #fff; }
.ico-qb { font: 400 24px "Open Sans", sans-serif; fill: #fff; text-anchor: middle; }
.tray { margin-left: auto; display: flex; align-items: center; padding-right: 37px; }
.tr-caret { width: 18px; height: 12px; }
.tr-sync { position: relative; margin-left: 15px; width: 24px; height: 24px; }
.tr-sync svg { width: 24px; height: 24px; display: block; }
.tr-dot { position: absolute; right: -2px; bottom: -4px; width: 11px; height: 11px; border-radius: 50%; background: #2a6fbf; }
.tr-bat { width: 24px; height: 17px; margin-left: 14px; }
.tr-wifi { width: 19px; height: 19px; margin-left: 21px; }
.tr-vol { width: 22px; height: 18px; margin-left: 12px; }
.tr-lang { margin-left: 15px; font: 20px "Open Sans", sans-serif; width: 34px; }
.tr-clock {
  width: 130px; margin-left: 0; text-align: center; display: flex; flex-direction: column; gap: 6px;
  font: 20px/21px "Open Sans", sans-serif;
}
.tr-note { position: relative; margin-left: 6px; width: 24px; height: 24px; }
.tr-note svg { width: 24px; height: 24px; display: block; }
.tr-badge {
  position: absolute; left: 11px; top: 9px; width: 24px; height: 24px; border-radius: 50%;
  background: #333; border: 1px solid #888; color: #eee; text-align: center;
  font: 700 15px/22px "Open Sans", sans-serif;
}
```
